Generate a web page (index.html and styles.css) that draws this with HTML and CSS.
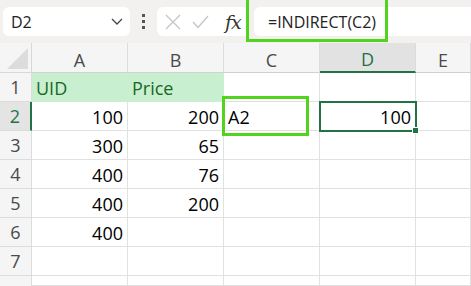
FILE: index.html
```html
<!DOCTYPE html>
<html>
<head>
<meta charset="utf-8">
<link rel="stylesheet" href="styles.css">
</head>
<body>
<div class="topbar">
  <div class="namebox">
    <span class="name">D2</span>
    <svg class="chev" width="12" height="7" viewBox="0 0 12 7"><path d="M1 1 L6 6 L11 1" fill="none" stroke="#444" stroke-width="1.3"/></svg>
  </div>
  <div class="dots"><i></i><i></i><i></i></div>
  <div class="fxbox">
    <svg class="ico" width="16" height="16" viewBox="0 0 16 16"><path d="M1 1 L15 15 M15 1 L1 15" stroke="#c4c4c4" stroke-width="1.3" fill="none"/></svg>
    <svg class="ico" width="17" height="14" viewBox="0 0 17 14"><path d="M1 7 L6 12.5 L16 1" stroke="#c4c4c4" stroke-width="1.3" fill="none"/></svg>
    <span class="fx">fx</span>
  </div>
  <div class="formula"><span class="ftext">=INDIRECT(C2)</span></div>
  <div class="fhl"></div>
</div>
<div class="sheet">
  <div class="corner"><span class="tri"></span></div>
  <div class="ch">A</div><div class="ch">B</div><div class="ch">C</div><div class="ch ch-sel">D</div><div class="ch">E</div>

  <div class="rh">1</div><div class="c good">UID</div><div class="c good">Price</div><div class="c"></div><div class="c"></div><div class="c"></div>
  <div class="rh rh-sel">2</div><div class="c n">100</div><div class="c n">200</div><div class="c">A2</div><div class="c n">100</div><div class="c"></div>
  <div class="rh">3</div><div class="c n">300</div><div class="c n">65</div><div class="c"></div><div class="c"></div><div class="c"></div>
  <div class="rh">4</div><div class="c n">400</div><div class="c n">76</div><div class="c"></div><div class="c"></div><div class="c"></div>
  <div class="rh">5</div><div class="c n">400</div><div class="c n">200</div><div class="c"></div><div class="c"></div><div class="c"></div>
  <div class="rh">6</div><div class="c n">400</div><div class="c"></div><div class="c"></div><div class="c"></div><div class="c"></div>
  <div class="rh">7</div><div class="c"></div><div class="c"></div><div class="c"></div><div class="c"></div><div class="c"></div>
  <div class="rh rh-last"></div><div class="c"></div><div class="c"></div><div class="c"></div><div class="c"></div><div class="c"></div>

  <div class="hl-c2"></div>
  <div class="sel-d2"><span class="handle"></span></div>
</div>
</body>
</html>
```

FILE: styles.css
```css
html, body {
  margin: 0;
  padding: 0;
  background: #ffffff;
  overflow: hidden;
}
body {
  width: 471px;
  height: 286px;
  font-family: "Open Sans", "Noto Sans", sans-serif;
}
.topbar {
  position: relative;
  height: 43px;
  background: #f3f0f0;
  display: flex;
  align-items: flex-start;
  padding-top: 7px;
  padding-left: 3px;
  box-sizing: border-box;
}
.namebox {
  width: 127px;
  height: 29px;
  background: #fff;
  border-radius: 6px;
  box-sizing: border-box;
  display: flex;
  align-items: center;
  justify-content: space-between;
  padding: 0 7px 0 8px;
}
.name {
  font-size: 16px;
  color: #222;
}
.dots {
  width: 27px;
  height: 29px;
  display: flex;
  flex-direction: column;
  align-items: center;
  justify-content: center;
  gap: 3px;
}
.dots i {
  display: block;
  width: 3px;
  height: 3px;
  background: #555;
}
.fxbox {
  width: 92px;
  height: 29px;
  background: #fff;
  border-radius: 6px;
  display: flex;
  align-items: center;
  padding-left: 8px;
  box-sizing: border-box;
  gap: 11px;
}
.fx {
  font-family: "DejaVu Serif", "Liberation Serif", serif;
  font-style: italic;
  font-size: 19px;
  color: #333;
  margin-left: 5px;
  letter-spacing: -1px;
}
.formula {
  flex: 1;
  height: 29px;
  margin-left: 5px;
  background: #fff;
  border-radius: 6px 0 0 6px;
  display: flex;
  align-items: center;
  padding-left: 14px;
}
.ftext {
  font-size: 16px;
  color: #222;
}
.fhl {
  position: absolute;
  left: 246px;
  top: -3px;
  width: 142px;
  height: 45px;
  border: 3px solid #52d31d;
  box-sizing: border-box;
}
.sheet {
  position: relative;
  display: grid;
  grid-template-columns: 32px 96px 96px 96px 96px 1fr;
  grid-template-rows: 30px repeat(7, 29px) 10px;
}
.corner {
  background: #f5f5f5;
  border-right: 1px solid #d8d8d8;
  border-bottom: 1px solid #d8d8d8;
  position: relative;
}
.tri {
  position: absolute;
  right: 3px;
  bottom: 3px;
  width: 0;
  height: 0;
  border-left: 21px solid transparent;
  border-bottom: 21px solid #dcdcdc;
}
.ch {
  background: #f5f5f5;
  border-right: 1px solid #dcdcdc;
  border-bottom: 1px solid #d0d0d0;
  display: flex;
  align-items: center;
  justify-content: center;
  font-size: 18px;
  color: #4a4a4a;
  padding-top: 4px;
  box-sizing: border-box;
}
.ch-sel {
  background: #e2e2e2;
  color: #217346;
  border-bottom: 2px solid #217346;
}
.rh {
  background: #f5f5f5;
  border-right: 1px solid #dcdcdc;
  border-bottom: 1px solid #dcdcdc;
  display: flex;
  align-items: center;
  justify-content: center;
  font-size: 18px;
  color: #4a4a4a;
  box-sizing: border-box;
}
.rh-last {
  border-bottom: none;
}
.rh-sel {
  background: #e4e4e4;
  color: #217346;
  border-right: 2px solid #217346;
}
.c {
  border-right: 1px solid #e1e1e1;
  border-bottom: 1px solid #e1e1e1;
  box-sizing: border-box;
  font-size: 18px;
  color: #000;
  display: flex;
  align-items: center;
  padding: 2px 4px 0 4px;
  white-space: nowrap;
}
.n {
  justify-content: flex-end;
}
.good {
  background: #c8efd0;
  color: #17691f;
  border-right-color: #c8efd0;
  border-bottom-color: #c8efd0;
}
.hl-c2 {
  position: absolute;
  left: 222px;
  top: 53px;
  width: 87px;
  height: 40px;
  border: 3px solid #52d31d;
  box-sizing: border-box;
}
.sel-d2 {
  position: absolute;
  left: 319px;
  top: 58px;
  width: 98px;
  height: 31px;
  border: 2px solid #217346;
  box-sizing: border-box;
}
.handle {
  position: absolute;
  right: -4px;
  bottom: -4px;
  width: 5px;
  height: 5px;
  background: #217346;
  border: 1px solid #fff;
}
```
